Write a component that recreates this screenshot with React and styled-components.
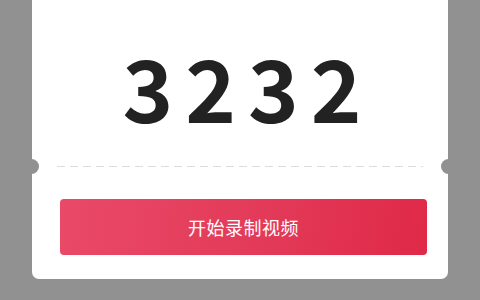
import React from "react";
import styled, { createGlobalStyle } from "styled-components";

const Global = createGlobalStyle`
  html, body { margin: 0; padding: 0; }
  body {
    background: #919191;
    width: 480px;
    height: 300px;
    overflow: hidden;
    font-family: "Noto Sans", "Noto Sans CJK SC", sans-serif;
  }
`;

const Card = styled.div`
  box-sizing: border-box;
  width: 416px;
  height: 279px;
  margin-left: 32px;
  background: #ffffff;
  border-radius: 0 0 7px 7px;
  display: flex;
  flex-direction: column;
  align-items: center;
  padding-top: 41px;
`;

const Code = styled.div`
  font-family: "Noto Sans CJK SC", sans-serif;
  font-weight: 700;
  font-size: 86px;
  line-height: 90px;
  height: 90px;
  color: #222222;
  letter-spacing: 12px;
  padding-left: 12px;
  margin-left: 4px;
`;

const Divider = styled.div`
  position: relative;
  align-self: stretch;
  height: 1px;
  margin-top: 35px;
  &::before,
  &::after {
    content: "";
    position: absolute;
    top: -7px;
    width: 15px;
    height: 15px;
    border-radius: 50%;
    background: #919191;
  }
  &::before { left: -8px; }
  &::after { right: -8px; }
`;

const Dash = styled.div`
  margin: 0 25px;
  height: 1px;
  background: repeating-linear-gradient(
    to right,
    #dcdcdc 0 8px,
    transparent 8px 13px
  );
`;

const Button = styled.button`
  margin-top: 32px;
  width: 367px;
  height: 56px;
  margin-left: 7px;
  border: none;
  border-radius: 4px;
  background: linear-gradient(100deg, #ea4968 0%, #e33a59 55%, #df2947 100%);
  color: #ffffff;
  font-family: "Noto Sans CJK SC", sans-serif;
  font-size: 18px;
  font-weight: 400;
  letter-spacing: 0.5px;
  display: flex;
  align-items: center;
  justify-content: center;
  padding: 0;
  cursor: pointer;
`;

export default function App() {
  return (
    <>
      <Global />
      <Card>
        <Code>3232</Code>
        <Divider>
          <Dash />
        </Divider>
        <Button>开始录制视频</Button>
      </Card>
    </>
  );
}
